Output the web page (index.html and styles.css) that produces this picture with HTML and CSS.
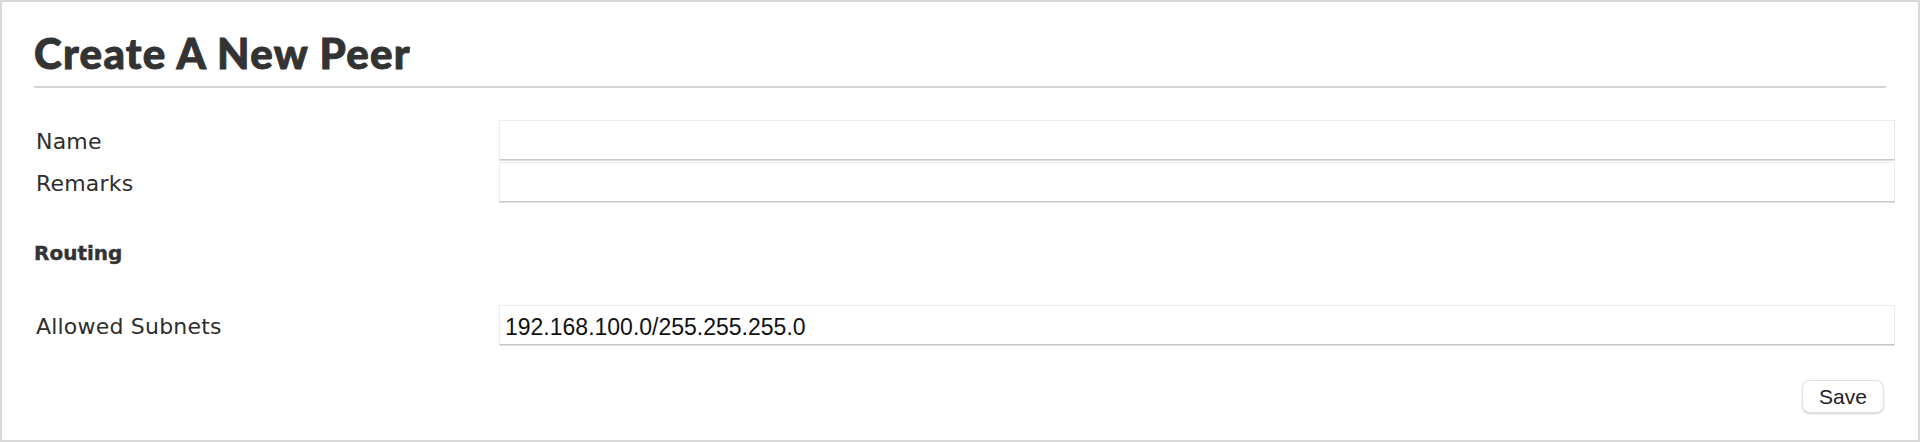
FILE: index.html
```html
<!DOCTYPE html>
<html lang="en">
<head>
<meta charset="utf-8">
<title>Create A New Peer</title>
<link rel="stylesheet" href="styles.css">
</head>
<body>
<div class="page">
  <h1 class="title">Create A New Peer</h1>
  <form class="form">
    <div class="row">
      <label class="label" for="name">Name</label>
      <input class="field" id="name" type="text">
    </div>
    <div class="row">
      <label class="label" for="remarks">Remarks</label>
      <input class="field" id="remarks" type="text">
    </div>
    <h2 class="section">Routing</h2>
    <div class="row">
      <label class="label" for="subnets">Allowed Subnets</label>
      <input class="field" id="subnets" type="text" value="192.168.100.0/255.255.255.0">
    </div>
    <div class="actions">
      <button class="btn" type="button">Save</button>
    </div>
  </form>
</div>
</body>
</html>
```
FILE: styles.css
```css
html, body {
  margin: 0;
  padding: 0;
  background: #ffffff;
}

.page {
  box-sizing: border-box;
  height: 442px;
  border: 2px solid #d9d9d9;
  padding: 0 32px;
  color: #333333;
}

.title {
  margin: 0;
  padding: 27px 0 8px;
  font-family: "Lato", "DejaVu Sans", sans-serif;
  font-weight: 900;
  font-size: 42px;
  line-height: 49px;
  letter-spacing: 1.3px;
  -webkit-text-stroke: 0.9px #333333;
  color: #333333;
  border-bottom: 2px solid #d6d6d6;
}

.form {
  display: flex;
  flex-direction: column;
  margin-top: 32px;
}

.row {
  display: grid;
  grid-template-columns: 465px 1fr;
  align-items: start;
}

.row + .row {
  margin-top: 2px;
}

.label {
  padding: 3px 0 0 2px;
  font-family: "DejaVu Sans", sans-serif;
  font-size: 22px;
  line-height: 37px;
  letter-spacing: 0.2px;
  color: #2e2e2e;
}

.field {
  box-sizing: border-box;
  width: calc(100% + 9px);
  height: 40px;
  margin: 0;
  padding: 4px 5px 0;
  border: 1px solid #ececec;
  border-bottom-color: #c9c9c9;
  border-radius: 0;
  box-shadow: 0 1px 0 #dedede;
  background: #ffffff;
  font-family: "Liberation Sans", Arial, sans-serif;
  font-size: 23px;
  color: #111111;
  outline: none;
}

.section {
  margin: 39px 0 40px;
  font-family: "DejaVu Sans", sans-serif;
  font-weight: 700;
  font-size: 20px;
  line-height: 24px;
  -webkit-text-stroke: 0.4px #333333;
  color: #333333;
}

.actions {
  display: flex;
  justify-content: flex-end;
  margin-top: 35px;
  padding-right: 2px;
}

.btn {
  box-sizing: border-box;
  width: 82px;
  height: 33px;
  padding: 0;
  border: 1px solid #e2e2e2;
  border-radius: 8px;
  background: #ffffff;
  box-shadow: 0 1px 2px rgba(0, 0, 0, 0.18);
  font-family: "Liberation Sans", Arial, sans-serif;
  font-size: 21px;
  color: #222222;
}
```
